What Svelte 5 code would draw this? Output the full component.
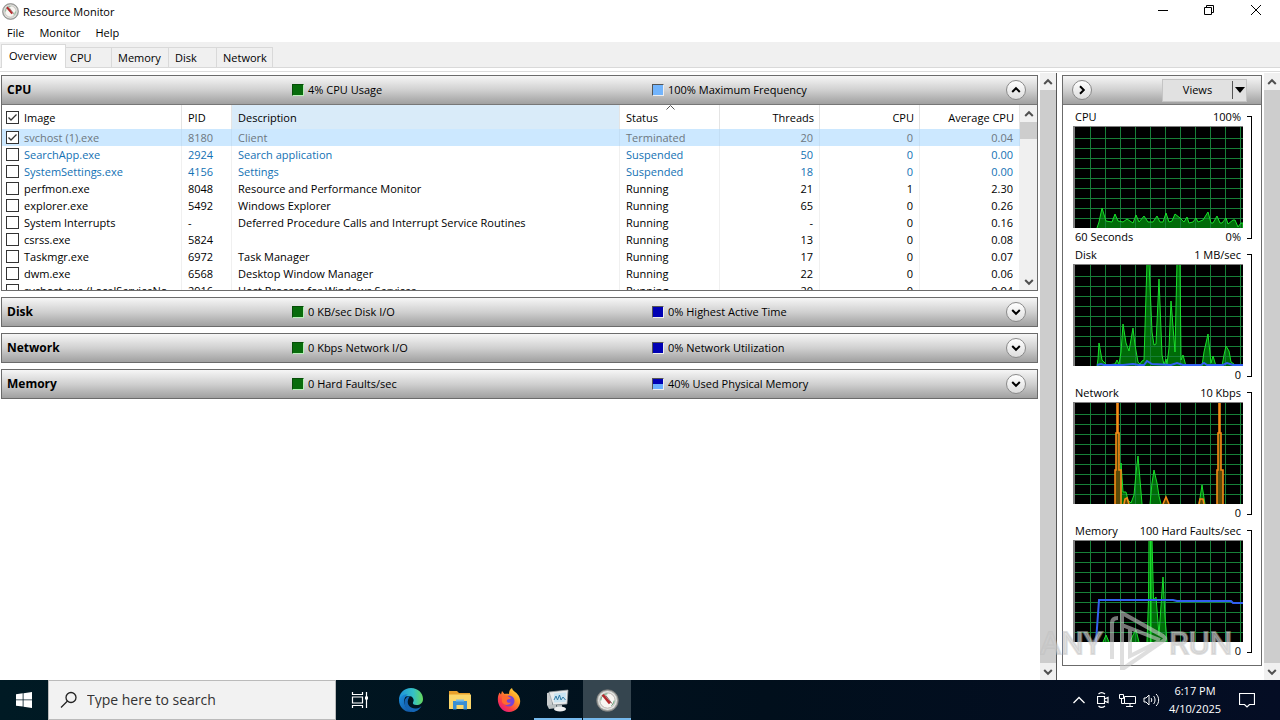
<script>
	const tabs = ['Overview', 'CPU', 'Memory', 'Disk', 'Network'];
	let activeTab = $state('Overview');

	const processes = [
		{ image: 'svchost (1).exe', pid: '8180', description: 'Client', status: 'Terminated', threads: '20', cpu: '0', average: '0.04', checked: true },
		{ image: 'SearchApp.exe', pid: '2924', description: 'Search application', status: 'Suspended', threads: '50', cpu: '0', average: '0.00' },
		{ image: 'SystemSettings.exe', pid: '4156', description: 'Settings', status: 'Suspended', threads: '18', cpu: '0', average: '0.00' },
		{ image: 'perfmon.exe', pid: '8048', description: 'Resource and Performance Monitor', status: 'Running', threads: '21', cpu: '1', average: '2.30' },
		{ image: 'explorer.exe', pid: '5492', description: 'Windows Explorer', status: 'Running', threads: '65', cpu: '0', average: '0.26' },
		{ image: 'System Interrupts', pid: '-', description: 'Deferred Procedure Calls and Interrupt Service Routines', status: 'Running', threads: '-', cpu: '0', average: '0.16' },
		{ image: 'csrss.exe', pid: '5824', description: '', status: 'Running', threads: '13', cpu: '0', average: '0.08' },
		{ image: 'Taskmgr.exe', pid: '6972', description: 'Task Manager', status: 'Running', threads: '17', cpu: '0', average: '0.07' },
		{ image: 'dwm.exe', pid: '6568', description: 'Desktop Window Manager', status: 'Running', threads: '22', cpu: '0', average: '0.06' },
		{ image: 'svchost.exe (LocalServiceNo...', pid: '2916', description: 'Host Process for Windows Services', status: 'Running', threads: '20', cpu: '0', average: '0.04' }
	];

	const closedPanels = [
		{ name: 'Disk', left: '0 KB/sec Disk I/O', right: '0% Highest Active Time', color: 'navy' },
		{ name: 'Network', left: '0 Kbps Network I/O', right: '0% Network Utilization', color: 'navy' },
		{ name: 'Memory', left: '0 Hard Faults/sec', right: '40% Used Physical Memory', color: 'split' }
	];

	const graphs = [
		{
			name: 'CPU',
			max: '100%',
			span: '60 Seconds',
			min: '0%',
			green: [
				'24,102 26,96 29,82 33,95 39,96 42,88 45,95 50,96 54,93 60,97 63,89 66,96 71,90 75,96 80,96 84,90 87,96 90,96 93,87 96,96 99,95 102,88 107,92 111,96 114,91 116,97 120,96 123,92 125,96 130,94 135,86 138,97 140,97 144,90 147,97 149,97 153,92 155,98 160,94 162,94 165,101 168,97 170,97 170,102'
			],
			orange: [],
			blue: ''
		},
		{
			name: 'Disk',
			max: '1 MB/sec',
			span: '',
			min: '0',
			green: [
				'24,102 25,95 26,79 29,96 31,98 34,101 42,100 44,96 46,100 48,88 50,60 53,79 56,87 60,64 62,81 65,98 67,100 69,97 71,96 74,-2 76,-2 79,68 81,81 83,80 86,15 89,91 91,101 93,95 94,100 96,84 98,37 102,88 104,-2 107,-2 108,96 110,91 113,102',
				'129,102 131,88 135,70 138,99 140,92 143,102',
				'149,102 151,91 153,82 156,87 158,98 161,100 163,102'
			],
			orange: [],
			blue: '24,101 28,100 31,101 50,101 60,100 66,101 71,101 74,97 79,100 98,101 104,99 110,101 128,101 131,99 134,101 150,101 154,99 160,101 170,101'
		},
		{
			name: 'Network',
			max: '10 Kbps',
			span: '',
			min: '0',
			green: [
				'48,102 48,61 50,90 53,90 55,98 58,101 61,93 63,71 65,54 67,78 69,102',
				'77,102 79,81 81,68 84,81 86,94 88,102',
				'126,102 127,96 129,83 131,96 132,102'
			],
			orange: [
				'42,102 42,68 43,68 43,31 44,31 44,-2 45,-2 45,31 46,31 46,68 48,68 48,102',
				'51,102 52,97 54,96 56,102',
				'90,102 93,95 96,102',
				'126,102 127,97 130,97 131,102',
				'144,102 144,68 145,68 145,31 146,31 146,-2 147,-2 147,31 148,31 148,68 150,68 150,102'
			],
			blue: ''
		},
		{
			name: 'Memory',
			max: '100 Hard Faults/sec',
			span: '',
			min: '0',
			green: [
				'30,102 33,95 36,102',
				'57,102 60,95 63,90 66,102',
				'74,102 75.5,60 76,-2 79,-2 80.5,60 83,57 86,95 87,80 90,37 92,77 94,102',
				'77.5,102 77.5,-2 78,-2 78,102'
			],
			orange: [],
			blue: '23,102 26,60 100,60 104,61 158,61 160,63 170,63'
		}
	];

	const columns = [17, 32, 47, 62, 77, 92, 107, 122, 137, 152, 167];
	const lines = [12, 22, 32, 42, 52, 62, 72, 82, 92];
</script>

{#snippet gauge(size)}
	<svg width={size} height={size} viewBox="0 0 24 24" aria-hidden="true">
		<circle cx="12" cy="12" r="11.3" fill="#a9aaa6" stroke="#777" stroke-width="0.8" />
		<circle cx="12" cy="12" r="9.8" fill="#e4e6e3" />
		<circle cx="12" cy="12" r="8" fill="#f8f6f2" stroke="#b3aaa6" stroke-width="0.9" />
		<path d="M5 12a7 7 0 0 1 7-7M19 12a7 7 0 0 1-3 5.5" fill="none" stroke="#5ca477" stroke-width="1" />
		<path d="M7 6l7.500 9" stroke="#b3292b" stroke-width="2.8" />
		<path d="M10 6.500l7 9" stroke="#7b5556" stroke-width="0.9" />
	</svg>
{/snippet}

{#snippet chevron(direction)}
	<svg class="chevron {direction}" width="10" height="10" viewBox="0 0 10 10" aria-hidden="true">
		<path d="M1.2 7L5 3.2 8.8 7" fill="none" stroke="currentColor" stroke-width="2" />
	</svg>
{/snippet}

{#snippet scrollbar(kind)}
	<div class="scrollbar {kind}">
		<button aria-label="Scroll up">{@render chevron('up')}</button>
		<div class="thumb"></div>
		<button aria-label="Scroll down">{@render chevron('down')}</button>
	</div>
{/snippet}

{#snippet panelHeader(name, left, right, color, direction)}
	<header class="panel-header">
		<h2>{name}</h2>
		<div class="legend"><span class="swatch green"></span>{left}</div>
		<div class="legend"><span class="swatch {color}"></span>{right}</div>
		<button class="round" aria-label="Toggle {name}">{@render chevron(direction)}</button>
	</header>
{/snippet}

<div class="screen">
	<div class="titlebar">
		{@render gauge(17)}
		<h1>Resource Monitor</h1>
		<div class="window-buttons">
			<button aria-label="Minimize">
				<svg width="12" height="12" viewBox="0 0 12 12"><path d="M1 6.5h10" stroke="#000" /></svg>
			</button>
			<button aria-label="Restore">
				<svg width="12" height="12" viewBox="0 0 12 12"><path d="M1.5 3.5h7v7h-7zM3.5 3V1.5h7v7H9" fill="none" stroke="#000" /></svg>
			</button>
			<button aria-label="Close">
				<svg width="12" height="12" viewBox="0 0 12 12"><path d="M1 1l10 10M11 1L1 11" stroke="#000" /></svg>
			</button>
		</div>
	</div>

	<nav class="menu">
		<button>File</button>
		<button>Monitor</button>
		<button>Help</button>
	</nav>

	<div class="tabs" role="tablist">
		{#each tabs as tab}
			<button role="tab" class={tab.toLowerCase()} class:active={tab === activeTab} aria-selected={tab === activeTab} onclick={() => (activeTab = tab)}>
				{tab}
			</button>
		{/each}
	</div>
	<div class="tab-edge"></div>

	<main>
		<div class="left">
			<div class="panels">
				<section class="panel">
					{@render panelHeader('CPU', '4% CPU Usage', '100% Maximum Frequency', 'sky', 'up')}
					<div class="table-area">
						<div class="table-clip">
							<table>
								<colgroup>
									<col class="w-image" />
									<col class="w-pid" />
									<col />
									<col class="w-value" />
									<col class="w-value" />
									<col class="w-value" />
									<col class="w-value" />
								</colgroup>
								<thead>
									<tr>
										<th><label><input type="checkbox" checked />Image</label></th>
										<th>PID</th>
										<th class="hover">Description</th>
										<th class="sorted">
											Status
											<svg width="9" height="5" viewBox="0 0 9 5"><path d="M0.5 4.5l4-4 4 4" fill="none" stroke="#555" /></svg>
										</th>
										<th class="number">Threads</th>
										<th class="number">CPU</th>
										<th class="number">Average CPU</th>
									</tr>
								</thead>
								<tbody>
									{#each processes as process (process.pid)}
										<tr class={process.status.toLowerCase()}>
											<td><label><input type="checkbox" checked={process.checked} />{process.image}</label></td>
											<td>{process.pid}</td>
											<td>{process.description}</td>
											<td>{process.status}</td>
											<td class="number">{process.threads}</td>
											<td class="number">{process.cpu}</td>
											<td class="number">{process.average}</td>
										</tr>
									{/each}
								</tbody>
							</table>
						</div>
						{@render scrollbar('inner')}
					</div>
				</section>

				{#each closedPanels as panel}
					<section class="panel">
						{@render panelHeader(panel.name, panel.left, panel.right, panel.color, 'down')}
					</section>
				{/each}
			</div>
			{@render scrollbar('outer')}
		</div>

		<aside>
			<div class="charts">
				<header class="panel-header views-bar">
					<button class="round" aria-label="Hide graphs">{@render chevron('right')}</button>
					<div class="views">
						<button>Views</button>
						<button class="drop" aria-label="View options">
							<svg width="10" height="6" viewBox="0 0 10 6"><path d="M0 0h10L5 6z" /></svg>
						</button>
					</div>
				</header>
				<div class="graph-list">
					{#each graphs as graph}
						<section class="graph">
							<div class="caption"><h3>{graph.name}</h3><span>{graph.max}</span></div>
							<svg class="plot" viewBox="0 0 170 102" preserveAspectRatio="none" role="img" aria-label="{graph.name} history">
								<rect width="170" height="102" fill="#000" />
								{#each graph.green as points}
									<polygon {points} fill="#006b08" stroke="none" />
								{/each}
								{#each columns as x}
									<rect {x} y="0" width="1" height="102" fill="#178038" />
								{/each}
								{#each lines as y}
									<rect x="0" {y} width="170" height="1" fill="#178038" />
								{/each}
								{#each graph.green as points}
									<polyline {points} fill="none" stroke="#19df2b" />
								{/each}
								{#each graph.orange as points}
									<polyline {points} fill="#5a4a08" stroke="#f58a16" stroke-width="1.6" />
								{/each}
								{#if graph.blue}
									<polyline points={graph.blue} fill="none" stroke="#315ff0" stroke-width="2" />
								{/if}
								<path d="M0 0.5H170" stroke="#808080" />
								<path d="M1 0V102" stroke="#808080" stroke-width="2" />
							</svg>
							<div class="caption"><span>{graph.span}</span><span>{graph.min}</span></div>
							<div class="bracket"></div>
						</section>
					{/each}
				</div>
			</div>
			{@render scrollbar('outer')}
		</aside>
	</main>

	<footer>
		<button class="start" aria-label="Start">
			<svg width="16" height="16" viewBox="0 0 16 16"><path d="M0 2.2L6.7 1.3V7.5H0zM7.5 1.2L16 0v7.5H7.5zM0 8.3h6.7v6.3L0 13.7zM7.5 8.3H16V16l-8.5-1.2z" fill="#fff" /></svg>
		</button>
		<label class="search">
			<svg width="18" height="18" viewBox="0 0 18 18"><circle cx="11" cy="6.5" r="5" fill="none" stroke="#222" stroke-width="1.3" /><path d="M7.5 10L1 16.5" stroke="#222" stroke-width="1.3" /></svg>
			<input type="text" placeholder="Type here to search" aria-label="Search" />
		</label>
		<div class="apps">
			<button class="task-view" aria-label="Task View">
				<svg width="18" height="16" viewBox="0 0 18 16" fill="none" stroke="#fff" stroke-width="1.2"><path d="M1.5 0v2.500h10V0M1.500 16v-2.500h10V16M1.500 5h10v6h-10zM15.500 0v16" /><path d="M14 4.500h3v3h-3z" fill="#fff" stroke="none" /></svg>
			</button>
			<button aria-label="Microsoft Edge">
				<svg width="26" height="26" viewBox="0 0 26 26">
					<defs>
						<linearGradient id="edge-top" x1="0" x2="1"><stop offset="0" stop-color="#1c92de" /><stop offset="0.6" stop-color="#35c1c5" /><stop offset="1" stop-color="#66d95b" /></linearGradient>
						<linearGradient id="edge-side" x1="0" x2="1" y2="1"><stop offset="0" stop-color="#1a90e0" /><stop offset="1" stop-color="#124e9c" /></linearGradient>
					</defs>
					<path d="M1 13C1 6 6 1 13 1c7 0 12 5 12 11 0 4-3 6-6.5 6-3 0-4-1.5-3.5-2.5 2-3-0.5-6.5-4-6.5-5 0-9 3-10 4z" fill="url(#edge-top)" />
					<path d="M1 13c1-4 5-6 9-5.5-3 1.5-4.5 5-3.5 9 1 4 4.5 7.5 9 8.300C7.500 26.500 1 20.500 1 13z" fill="url(#edge-side)" />
					<path d="M10 13c-1.5 5 3 9 8 8.5 2.500 0 4.500-1.500 5.500-2.500-2 4-6 6.300-9 6C9 24 6 19 6.500 14.500 7 11 9.500 9 12 9.300c-1 1-1.700 2.200-2 3.700z" fill="#1465b4" />
				</svg>
			</button>
			<button aria-label="File Explorer">
				<svg width="22" height="20" viewBox="0 0 22 20">
					<path d="M0 1h8l2 2h11v4H0z" fill="#e8a02b" />
					<path d="M0 4.500h22V19H0z" fill="#fbd66a" />
					<path d="M4 11h14v8.500h-3.500V15h-7v4.500H4z" fill="#398fd4" />
					<path d="M7 9.500h8v2H7z" fill="#76bdec" />
				</svg>
			</button>
			<button aria-label="Firefox">
				<svg width="24" height="24" viewBox="0 0 24 24">
					<defs><linearGradient id="fox" x1="1" x2="0.2" y2="1"><stop offset="0" stop-color="#fff04a" /><stop offset="0.4" stop-color="#ff9a24" /><stop offset="0.75" stop-color="#fb3c45" /><stop offset="1" stop-color="#e31587" /></linearGradient></defs>
					<path d="M2.5 4.5L4 6.500 5 3l2.500 3c1.500-0.500 3-0.500 4.500 0 0-3 1-5 3-6 0.500 3 4 3.500 6.500 7.500C26 15 21 24 12 24S-2 13 2.500 4.500z" fill="url(#fox)" />
					<circle cx="12" cy="13" r="5.5" fill="#7643d7" />
					<path d="M5 8c3-1.500 5-0.500 7 1l2 1c-1 1.500-3 1-4 2-1 2 1 3.500 4 2.500-1.500 3-7 3.500-9-0.500z" fill="#ff6a2f" />
				</svg>
			</button>
			<button class="open" aria-label="Task Manager">
				<svg width="24" height="23" viewBox="0 0 24 23">
					<path d="M1 4l5-1v14l-5-1z" fill="#c9cccd" />
					<path d="M3 3l19-2-1 14-14 1z" fill="#e9ebec" stroke="#989ea1" stroke-width="0.7" />
					<path d="M8 4.500l12-1-0.500 9.500L8 13.500z" fill="#c8e3f1" />
					<path d="M8 11l2-4 1.500 4 2-5 1.500 5 2-3 2.500 3" fill="none" stroke="#337ba5" />
					<path d="M1 16l9-1 1 4-8 1z" fill="#b9bfc1" />
					<path d="M11 16h5v3h-5z" fill="#aeb5b8" />
					<ellipse cx="14" cy="20" rx="6" ry="2.5" fill="#eceeef" />
				</svg>
			</button>
			<button class="open current" aria-label="Resource Monitor">{@render gauge(23)}</button>
		</div>
		<div class="tray">
			<button aria-label="Show hidden icons">
				<svg width="14" height="10" viewBox="0 0 14 10"><path d="M1.5 8L7 2.5 12.5 8" fill="none" stroke="#fff" stroke-width="1.3" /></svg>
			</button>
			<button aria-label="Meet Now">
				<svg width="12" height="18" viewBox="0 0 12 18" fill="none" stroke="#fff"><path d="M0.500 5.500h7v7h-7zM7.500 8l3.500-1.500v5L7.500 10M1.500 3c2-2 4-2 6.500 0M1.500 15c2 2 4 2 6.500 0" stroke-width="1.2" /></svg>
			</button>
			<button aria-label="Network">
				<svg width="17" height="15" viewBox="0 0 17 15" fill="none" stroke="#fff"><path d="M5.500 3.500h11v7h-11zM11 10.500v3M7 13.500h7M0.500 1.500h4v4h-4zM2.500 5.500v5h3" /></svg>
			</button>
			<button aria-label="Volume">
				<svg width="17" height="14" viewBox="0 0 17 14" fill="none" stroke="#fff"><path d="M1 5h2l3-3v10L3 9H1zM8 5c1 1 1 3 0 4M10.500 3c2 2 2 6 0 8M13 1c3.500 3 3.500 9 0 12" /></svg>
			</button>
			<time><span>6:17 PM</span><span>4/10/2025</span></time>
			<button class="notes" aria-label="Notifications">
				<svg width="16" height="16" viewBox="0 0 16 16"><path d="M0.500 1.500h15v11h-5L8 15l-2.500-2.500h-5z" fill="none" stroke="#fff" stroke-width="1.2" /></svg>
			</button>
		</div>
	</footer>

	<svg class="watermark" width="198" height="64" viewBox="0 0 198 64" aria-hidden="true">
		<text x="0" y="45">ANY</text>
		<text x="129" y="45">RUN</text>
		<path d="M72 50V14q0-5 6-5M82 59V4l41 23q4 3 0 5L84 59zM82 16l38 15M90 20v27l30-15" />
	</svg>
</div>

<style>
	:global(body) {
		background: #fff;
	}

	.screen {
		position: relative;
		display: flex;
		flex-direction: column;
		min-height: 100vh;
		font-family: 'Open Sans', 'Noto Sans', sans-serif;
		font-size: 11px;
		line-height: 16px;
		color: #000;
	}

	button {
		display: flex;
		align-items: center;
		justify-content: center;
		padding: 0;
		border: none;
		background: none;
		color: inherit;
		font: inherit;
	}

	h1,
	h2,
	h3 {
		margin: 0;
		font-size: inherit;
		font-weight: normal;
	}

	.titlebar {
		display: flex;
		align-items: center;
		gap: 4px;
		height: 23px;
		padding-left: 2px;
	}

	.titlebar h1 {
		flex: 1;
	}

	.window-buttons {
		display: flex;
		align-self: flex-start;
	}

	.window-buttons button {
		width: 46px;
		height: 20px;
	}

	.window-buttons button:last-child {
		width: 48px;
	}

	.menu {
		display: flex;
		gap: 15px;
		height: 19px;
		padding: 0 7px;
	}

	.menu button {
		height: 20px;
	}

	.tabs {
		display: flex;
		align-items: flex-end;
		height: 25px;
		padding-left: 1px;
		background: #f0f0f0;
		border-bottom: 1px solid #d9d9d9;
	}

	.tabs button {
		justify-content: flex-start;
		height: 20px;
		padding-left: 6px;
		border: 1px solid #d9d9d9;
		border-width: 1px 1px 0 0;
	}

	.tabs .overview {
		width: 65px;
	}

	.tabs .cpu {
		width: 46px;
		padding-left: 4px;
	}

	.tabs .memory {
		width: 57px;
	}

	.tabs .disk {
		width: 48px;
	}

	.tabs .network {
		width: 56px;
	}

	.tabs .active {
		height: 24px;
		margin-bottom: -1px;
		padding-bottom: 2px;
		border-left-width: 1px;
		padding-left: 7px;
		background: #fff;
	}

	.tab-edge {
		height: 3px;
		border-bottom: 1px solid #dcdcdc;
	}

	main {
		display: flex;
		flex: 1;
		padding-top: 1px;
	}

	.left {
		display: flex;
		flex: 1;
		gap: 2px;
		padding-left: 1px;
		border-right: 1px solid #555;
	}

	.panels {
		flex: 1;
		display: flex;
		flex-direction: column;
		gap: 6px;
		padding-top: 2px;
	}

	.panel {
		border: 1px solid #6b6b6b;
	}

	.panel-header {
		display: grid;
		grid-template-columns: 290px 360px 1fr 20px;
		align-items: center;
		height: 28px;
		padding-right: 11px;
		background: linear-gradient(#f6f6f6, #d0d0d0 50%, #a0a0a0);
	}

	.panel-header h2 {
		padding-left: 5px;
		font-size: 12px;
		font-weight: bold;
	}

	.legend {
		display: flex;
		align-items: center;
		gap: 4px;
	}

	.swatch {
		box-sizing: border-box;
		width: 12px;
		height: 12px;
		border: 1px solid;
		border-color: #555 #eee #eee #555;
	}

	.green {
		background: #086c0c;
		border-color: #064d08 #b8f0b8 #b8f0b8 #064d08;
	}

	.sky {
		background: #72b4fc;
	}

	.navy {
		background: #0000b4;
	}

	.split {
		background: linear-gradient(#0000b4 55%, #6cb0ff 55%);
	}

	.round {
		box-sizing: border-box;
		width: 20px;
		height: 20px;
		border: 1px solid #8a8a8a;
		border-radius: 50%;
		background: linear-gradient(#fff, #ddd);
	}

	.chevron.down {
		transform: rotate(180deg);
	}

	.chevron.right {
		transform: rotate(90deg);
	}

	.table-area {
		display: flex;
		height: 186px;
		border-top: 1px solid #777;
		box-sizing: border-box;
	}

	.table-clip {
		flex: 1;
		overflow: hidden;
	}

	table {
		width: 100%;
		table-layout: fixed;
		border-collapse: separate;
		border-spacing: 0;
	}

	.w-image {
		width: 180px;
	}

	.w-pid {
		width: 50px;
	}

	.w-value {
		width: 100px;
	}

	th,
	td {
		height: 17px;
		padding: 0 6px;
		border-right: 1px solid #f0f0f0;
		font-weight: normal;
		line-height: 17px;
		text-align: left;
		white-space: nowrap;
		overflow: hidden;
	}

	th {
		height: 24px;
		border-color: #e4e4e4;
	}

	th:first-child,
	td:first-child {
		padding: 0 10px 0 4px;
	}

	.number {
		padding-left: 0;
		text-align: right;
	}

	th.number {
		padding-right: 5px;
	}

	.hover {
		background: #d9ebf9;
	}

	.sorted {
		position: relative;
	}

	.sorted svg {
		position: absolute;
		top: 0;
		left: 46px;
	}

	label {
		display: flex;
		align-items: center;
		gap: 5px;
	}

	input[type='checkbox'] {
		flex: none;
		appearance: none;
		width: 13px;
		height: 13px;
		margin: 0;
		border: 1px solid #333;
		background: #fff;
	}

	input[type='checkbox']:checked {
		background: #fff url("data:image/svg+xml,%3Csvg xmlns='http://www.w3.org/2000/svg' viewBox='0 0 11 11'%3E%3Cpath d='M1.5 5.5L4 8l5.5-5.5' fill='none' stroke='%23333' stroke-width='1.3'/%3E%3C/svg%3E");
	}

	.terminated td {
		background: #cce8ff;
		border-color: #c3def5;
		color: #6d7780;
	}

	.suspended td {
		color: #1271b4;
	}

	.scrollbar {
		display: flex;
		flex-direction: column;
		width: 16px;
		background: #f0f0f0;
		color: #505050;
	}

	.inner {
		width: 17px;
	}

	.scrollbar button {
		height: 17px;
	}

	.thumb {
		background: #cdcdcd;
	}

	.outer .thumb {
		flex: 1;
	}

	.inner .thumb {
		height: 17px;
		margin-bottom: auto;
	}

	aside {
		display: flex;
		flex: none;
		gap: 2px;
		padding-left: 5px;
	}

	.charts {
		width: 198px;
		align-self: flex-start;
		margin-top: 2px;
		border: 1px solid #6b6b6b;
	}

	.views-bar {
		display: flex;
		justify-content: space-between;
		padding: 0 14px 0 9px;
	}

	.views {
		display: flex;
		border: 1px solid #c4c4c4;
		background: #e1e1e1;
	}

	.views button {
		width: 69px;
		height: 21px;
	}

	.views .drop {
		width: 14px;
		height: 18px;
		align-self: center;
		border-left: 1px solid #555;
	}

	.graph-list {
		padding: 3px 9px 5px 10px;
		border-top: 1px solid #777;
	}

	.graph {
		display: grid;
		grid-template-columns: 1fr 5px;
		grid-template-rows: 18px 102px 18px;
		column-gap: 4px;
	}

	.caption {
		display: flex;
		justify-content: space-between;
		align-items: center;
		padding: 0 2px;
	}

	.plot {
		display: block;
		width: 100%;
		height: 102px;
	}

	.bracket {
		grid-column: 2;
		grid-row: 1 / 4;
		margin: 8px 0 7px;
		border: 1px solid #000;
		border-left: none;
	}

	footer {
		display: flex;
		height: 40px;
		background: linear-gradient(90deg, #001a24, #010f1c 60%, #040d24);
		color: #fff;
	}

	.start {
		width: 48px;
	}

	.search {
		box-sizing: border-box;
		width: 288px;
		gap: 9px;
		padding-left: 11px;
		border: 1px solid #bbb;
		background: #f2f2f2;
	}

	.search input {
		flex: 1;
		min-width: 0;
		padding: 0;
		border: none;
		background: none;
		font: inherit;
		font-size: 14px;
	}

	.search input::placeholder {
		color: #333;
	}

	.apps {
		display: flex;
		flex: 1;
		gap: 1px;
	}

	.apps button {
		box-sizing: border-box;
		width: 48px;
		border: 2px solid transparent;
		border-width: 2px 0;
	}

	.apps .task-view {
		margin-right: 2px;
	}

	.apps .open {
		border-bottom-color: #76b9ed;
	}

	.apps .current {
		background: #35454f;
		border-top-color: #35454f;
	}

	.tray {
		display: flex;
		align-items: center;
	}

	.tray button {
		width: 24px;
		height: 40px;
	}

	time {
		display: flex;
		flex-direction: column;
		width: 64px;
		line-height: 18px;
		text-align: center;
	}

	.tray .notes {
		width: 40px;
		margin-right: 13px;
	}

	.watermark {
		position: absolute;
		right: 42px;
		bottom: 47px;
		fill: rgba(215, 215, 215, 0.6);
		stroke: rgba(190, 190, 190, 0.5);
		stroke-width: 2;
		font-family: Roboto, sans-serif;
		font-size: 32px;
		pointer-events: none;
	}

	.watermark path {
		fill: none;
		stroke: rgba(200, 200, 200, 0.6);
		stroke-width: 4;
	}
</style>
